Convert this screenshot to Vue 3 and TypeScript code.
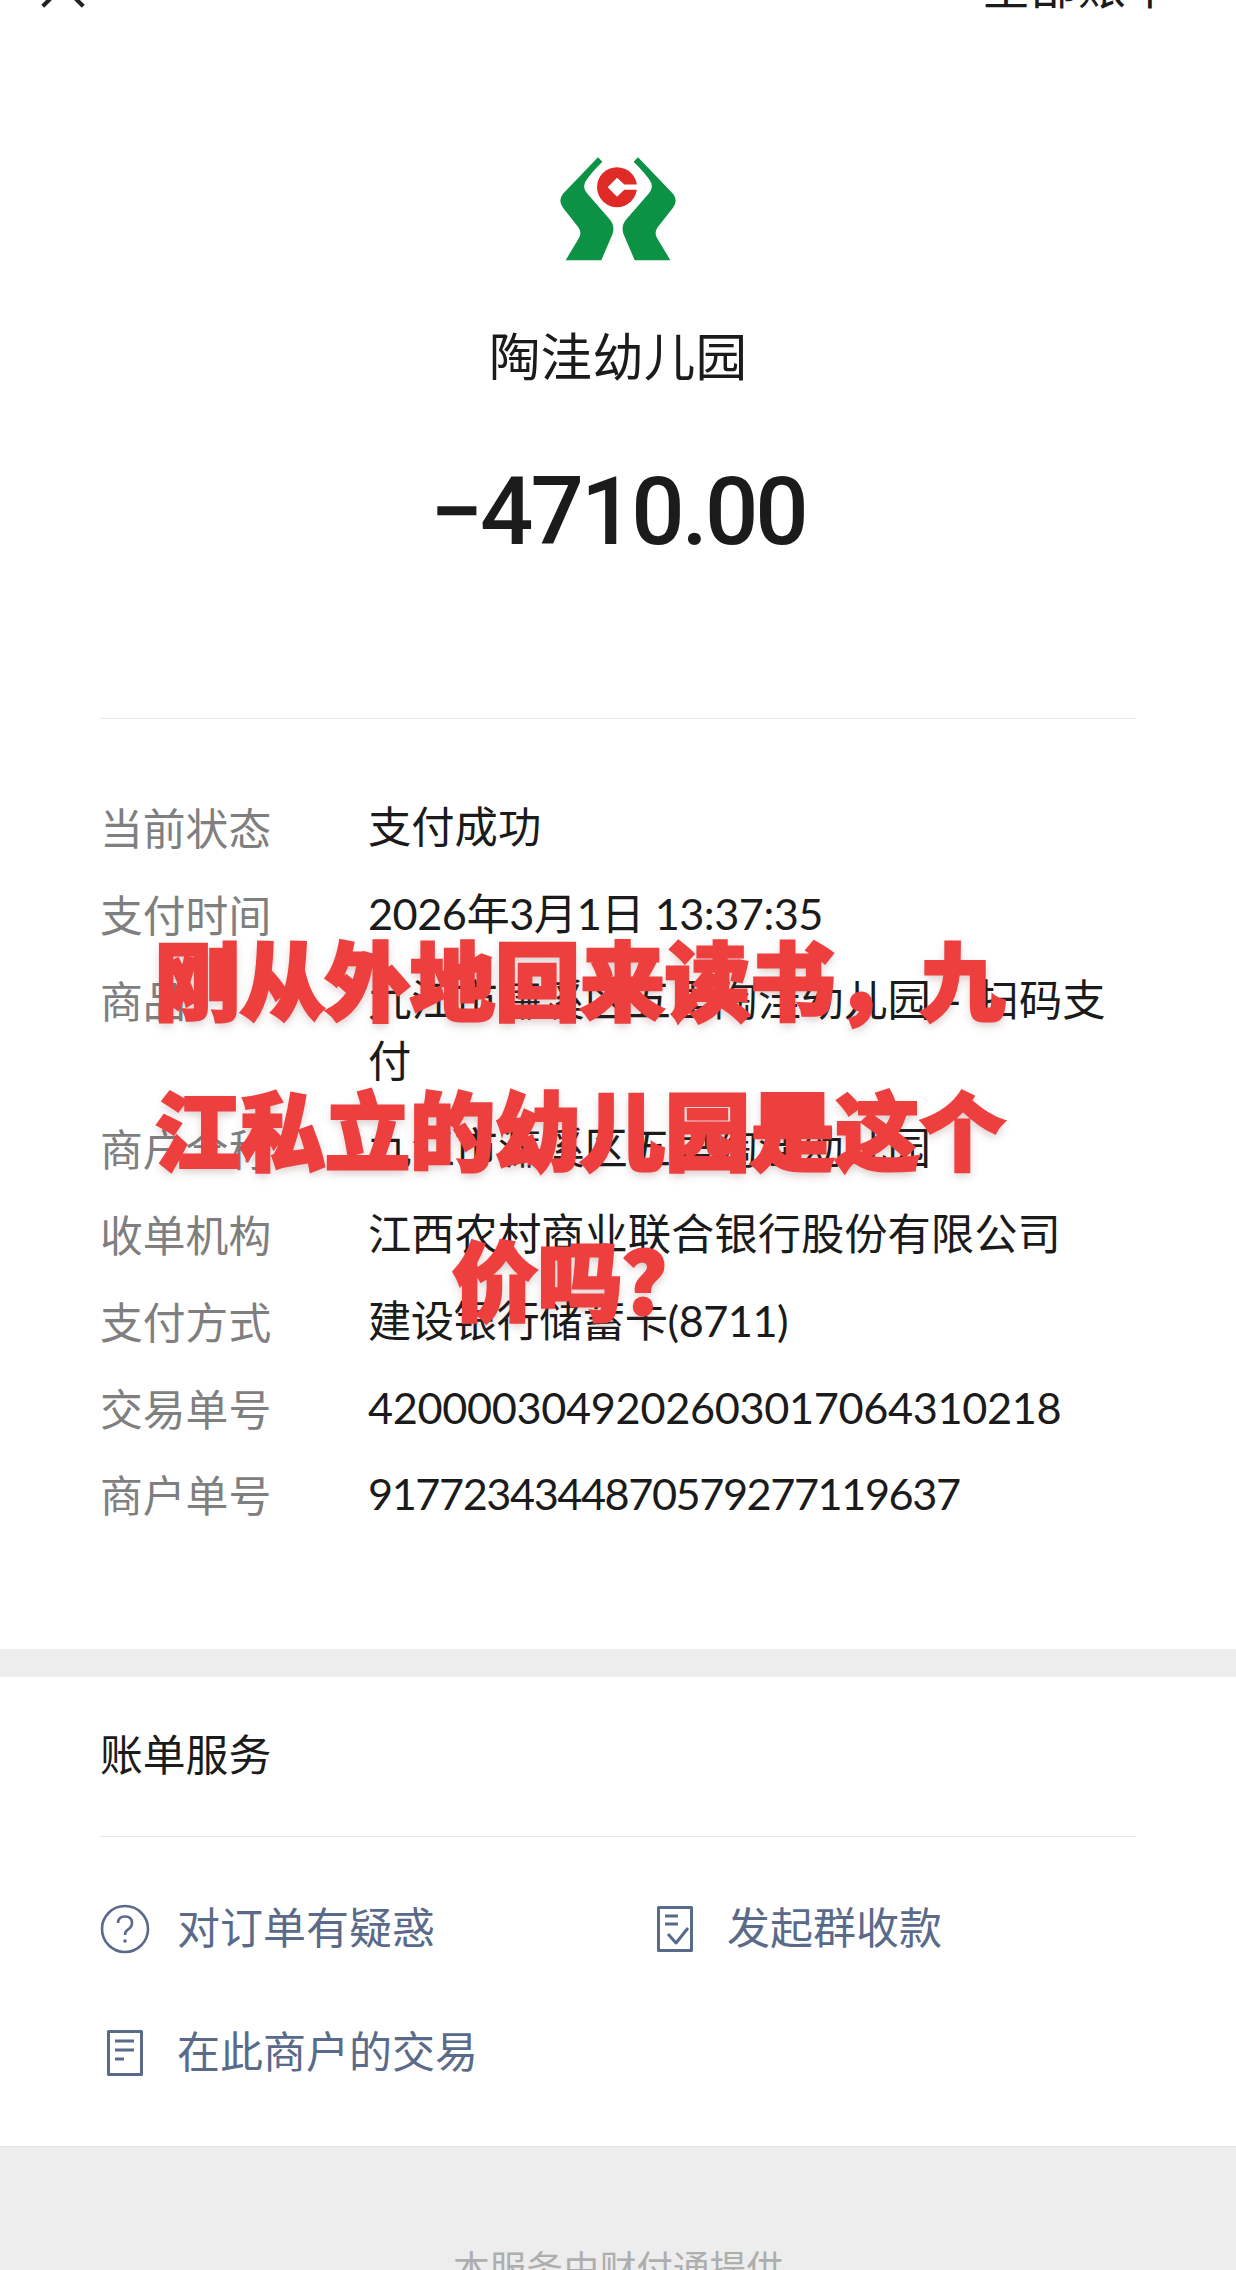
<template>
  <div class="page">
    <div class="topbar">
      <svg class="close" viewBox="0 0 50 50" width="46" height="46">
        <path d="M3 3 L47 47 M47 3 L3 47" fill="none" stroke="#222" stroke-width="4.5" />
      </svg>
      <span class="all-bills">全部账单</span>
    </div>

    <section class="summary">
      <svg class="logo" viewBox="85 36 360 329" width="120" height="110">
        <path fill="#0c9244" d="M205 48 L218 62 Q180 100 167 122 Q158 140 172 156 L238 232 Q258 254 248 280 L215 357 L108 357 L147 292 Q158 274 146 258 L100 200 Q84 178 100 158 Z" />
        <path fill="#0c9244" d="M325 48 L312 62 Q350 100 363 122 Q372 140 358 156 L292 232 Q272 254 282 280 L315 357 L422 357 L383 292 Q372 274 384 258 L430 200 Q446 178 430 158 Z" />
        <circle cx="262" cy="138" r="60" fill="#df2a26" />
        <path fill="#fff" d="M262 110 L284 130 L325 130 L325 146 L284 146 L262 167 L234 138 Z" />
      </svg>
      <div class="merchant">陶洼幼儿园</div>
      <div class="amount">−4710.00</div>
    </section>

    <div class="details">
      <div v-for="row in rows" :key="row.label" class="row">
        <span class="label">{{ row.label }}</span>
        <span class="value" :class="row.kind">{{ row.value }}</span>
      </div>
    </div>

    <div class="band"></div>

    <section class="services">
      <div class="services-title">账单服务</div>
      <div class="links">
        <a class="link">
          <svg viewBox="0 0 50 50" width="50" height="50">
            <circle cx="25" cy="25" r="23" fill="none" stroke="#5a6a8a" stroke-width="2.6" />
            <path d="M18 19 Q18 12.500 25 12.500 Q32 12.500 32 19 Q32 23 28 25.500 Q25 27.500 25 31" fill="none" stroke="#5a6a8a" stroke-width="2.6" />
            <circle cx="25" cy="37" r="1.800" fill="#5a6a8a" />
          </svg>
          <span>对订单有疑惑</span>
        </a>
        <a class="link">
          <svg viewBox="0 0 50 50" width="50" height="50">
            <path d="M8.500 3.500 H41.500 V46.500 H8.500 Z M15 12 H28 M15 20 H28 M18 30 L26 39 L38 24" fill="none" stroke="#5a6a8a" stroke-width="3" stroke-linejoin="round" />
          </svg>
          <span>发起群收款</span>
        </a>
        <a class="link">
          <svg viewBox="0 0 50 50" width="50" height="50">
            <path d="M8.500 3.500 H41.500 V46.500 H8.500 Z M15 13 H34 M15 22 H34 M15 31 H24" fill="none" stroke="#5a6a8a" stroke-width="3" stroke-linejoin="round" />
          </svg>
          <span>在此商户的交易</span>
        </a>
      </div>
    </section>

    <footer class="foot">本服务由财付通提供</footer>

    <div class="caption">刚从外地回来读书，九江私立的幼儿园是这个价吗？</div>
  </div>
</template>

<script setup lang="ts">
interface Row {
  label: string;
  value: string;
  kind?: 'date' | 'num' | 'tight';
}

const rows: Row[] = [
  { label: '当前状态', value: '支付成功' },
  { label: '支付时间', value: '2026年3月1日 13:37:35', kind: 'date' },
  { label: '商品', value: '九江市濂溪区五里陶洼幼儿园\u2004-\u2004扫码支付' },
  { label: '商户全称', value: '九江市濂溪区五里陶洼幼儿园' },
  { label: '收单机构', value: '江西农村商业联合银行股份有限公司' },
  { label: '支付方式', value: '建设银行储蓄卡(8711)', kind: 'date' },
  { label: '交易单号', value: '4200003049202603017064310218', kind: 'num' },
  { label: '商户单号', value: '9177234344870579277119637', kind: 'tight' },
];
</script>

<style>
html,
body {
  margin: 0;
  background: #fff;
}
</style>

<style scoped>
.page {
  position: relative;
  width: 1236px;
  height: 2270px;
  overflow: hidden;
  background: #fff;
  font-family: "Noto Sans CJK SC", "Noto Sans", sans-serif;
  color: #1b1b1b;
}

.topbar {
  height: 9px;
  padding: 0 62px 0 40px;
  display: flex;
  justify-content: space-between;
  align-items: flex-end;
  overflow: hidden;
}
.close {
  flex: none;
}
.all-bills {
  font-size: 48px;
  line-height: 60px;
  margin-bottom: -4px;
  flex: none;
}

.summary {
  display: flex;
  flex-direction: column;
  align-items: center;
  padding-top: 144px;
}
.logo {
  display: block;
}
.merchant {
  margin-top: 56px;
  font-size: 51.6px;
  line-height: 70px;
}
.amount {
  margin-top: 68px;
  font-family: Roboto, sans-serif;
  font-size: 94px;
  line-height: 110px;
  font-weight: 500;
  letter-spacing: -3px;
}

.details {
  margin: 151px 100px 0;
  padding-top: 77px;
  border-top: 1px solid #e8e8e8;
  display: flex;
  flex-direction: column;
  gap: 25.6px;
}
.row {
  display: flex;
  font-size: 43.3px;
  line-height: 61px;
}
.label {
  width: 268px;
  flex: none;
  font-size: 42.8px;
  color: #7f7f7f;
}
.value {
  flex: 1;
  font-family: Lato, "Noto Sans CJK SC", sans-serif;
  word-break: break-all;
}
.value.date {
  letter-spacing: -0.5px;
}
.value.num {
  letter-spacing: -0.35px;
}
.value.tight {
  letter-spacing: -1.45px;
}

.band {
  height: 28px;
  margin-top: 125px;
  background: #ededed;
}

.services-title {
  margin: 45px 100px 0;
  padding-bottom: 53px;
  border-bottom: 1px solid #e8e8e8;
  font-size: 42.8px;
  line-height: 61px;
}
.links {
  margin: 58px 100px 0;
  display: grid;
  grid-template-columns: 550px 1fr;
  row-gap: 63px;
}
.link {
  display: flex;
  align-items: center;
  gap: 27px;
  color: #5a6a8a;
  font-size: 43px;
  line-height: 61px;
}
.link svg {
  flex: none;
  margin-top: 6px;
}

.foot {
  margin-top: 66px;
  height: 200px;
  padding-top: 94px;
  background: #ededed;
  border-top: 1px solid #e4e4e4;
  text-align: center;
  color: #aeaeae;
  font-size: 36.7px;
  line-height: 50px;
}

/* sticker text laid over the receipt */
.caption {
  position: absolute;
  left: 150px;
  top: 902px;
  width: 860px;
  text-align: center;
  font-size: 85px;
  line-height: 150px;
  font-weight: 900;
  color: #ee3f3f;
  -webkit-text-stroke: 3px #ee3f3f;
  text-shadow: 0 4px 10px rgba(120, 60, 60, 0.3);
}
</style>
